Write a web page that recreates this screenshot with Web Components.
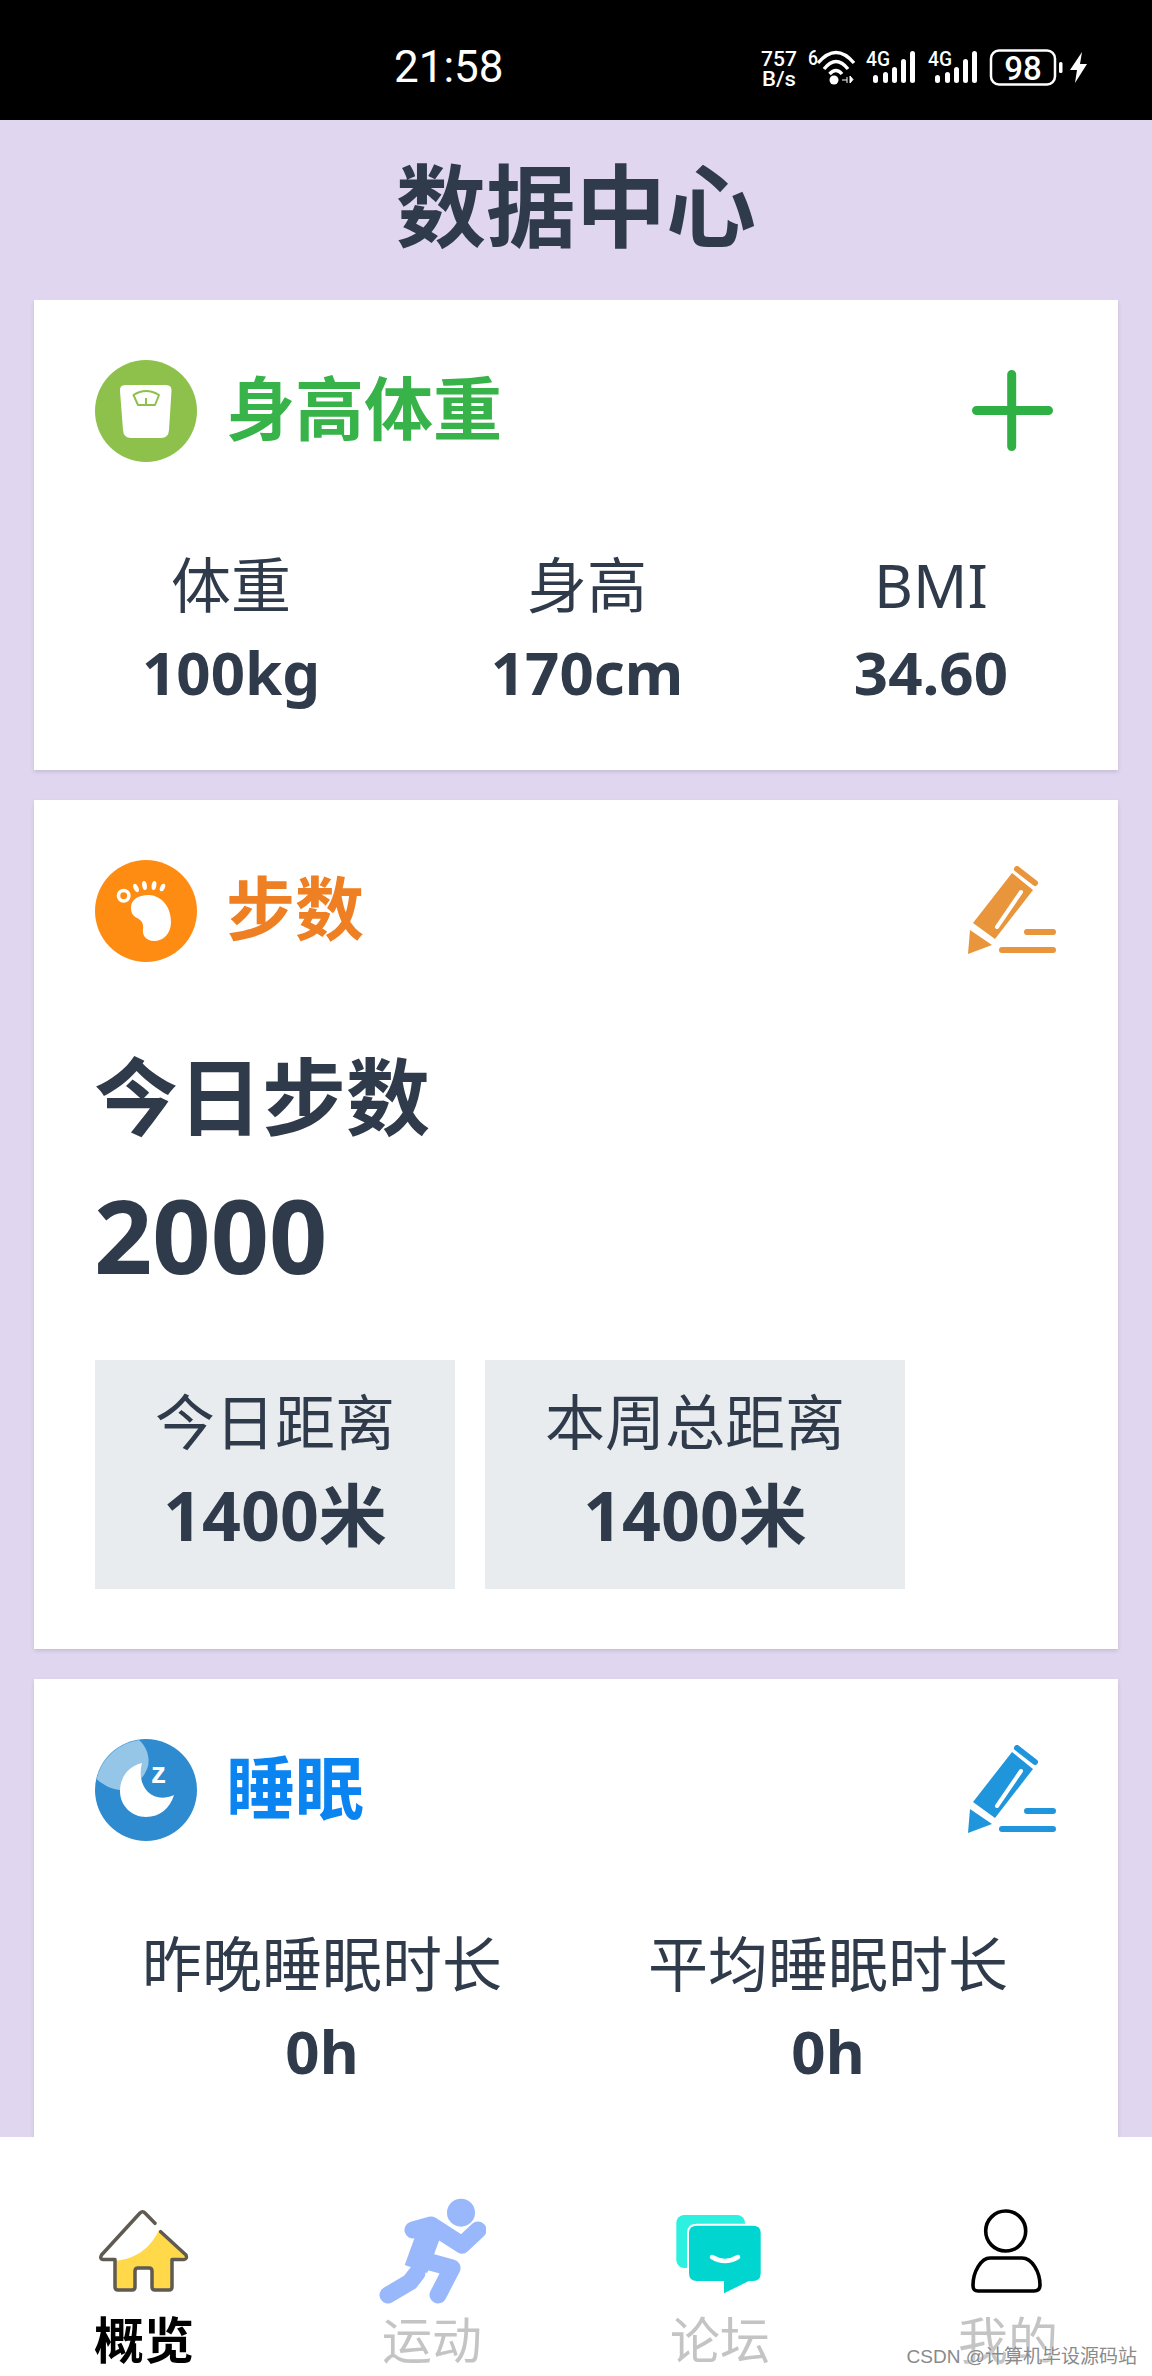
<!DOCTYPE html>
<html lang="zh">
<head>
<meta charset="utf-8">
<title>数据中心</title>
<style>
    html, body { margin: 0; padding: 0; height: 100%; }
    body {
        font-family: "Noto Sans", "Noto Sans CJK SC", sans-serif;
        color: #2f3a4a;
        background: #e0d6f0;
    }
</style>
</head>
<body>
<app-shell>
    <status-bar slot="status"></status-bar>
    <page-title slot="title">数据中心</page-title>

    <data-card heading="身高体重" color="#37b34a">
        <app-icon slot="icon" name="scale" size="102"></app-icon>
        <app-icon slot="action" name="plus" size="102"></app-icon>
        <stat-row>
            <stat-item label="体重" value="100kg"></stat-item>
            <stat-item label="身高" value="170cm"></stat-item>
            <stat-item label="BMI" value="34.60"></stat-item>
        </stat-row>
    </data-card>

    <data-card heading="步数" color="#ee7f22">
        <app-icon slot="icon" name="foot" size="102"></app-icon>
        <edit-icon slot="action" color="#e8953c"></edit-icon>
        <step-summary label="今日步数" value="2000"></step-summary>
        <box-row>
            <stat-box label="今日距离" value="1400米"></stat-box>
            <stat-box label="本周总距离" value="1400米"></stat-box>
        </box-row>
    </data-card>

    <data-card heading="睡眠" color="#0a84f0">
        <app-icon slot="icon" name="sleep" size="102"></app-icon>
        <edit-icon slot="action" color="#1f96dc"></edit-icon>
        <stat-row>
            <stat-item label="昨晚睡眠时长" value="0h"></stat-item>
            <stat-item label="平均睡眠时长" value="0h"></stat-item>
        </stat-row>
    </data-card>

    <tab-bar slot="tabs">
        <tab-item label="概览" icon="home" active></tab-item>
        <tab-item label="运动" icon="run"></tab-item>
        <tab-item label="论坛" icon="chat"></tab-item>
        <tab-item label="我的" icon="user"></tab-item>
    </tab-bar>
    <water-mark slot="tabs">CSDN @计算机毕设源码站</water-mark>
</app-shell>

<script>
// icon bodies, all drawn in a 102 or 108 box
const ICONS = {
    scale: `<circle cx="51" cy="51" r="51" fill="#8dc14b"/>
        <path d="M30 25H71Q77 25 76.5 31L74 70Q73.5 78 66 78H36Q28.5 78 28 70L25 31Q24.5 25 30 25Z" fill="#fff"/>
        <path d="M38.5 35Q51 27 64 35L60 45H43Z M51 38V45" fill="none" stroke="#8dc14b" stroke-width="2" stroke-linejoin="round"/>`,
    plus: `<path d="M20.500 50.500H92.500M55.700 14.500V86.500" stroke="#2fb044" stroke-width="9" stroke-linecap="round" fill="none"/>`,
    foot: `<circle cx="51" cy="51" r="51" fill="#ff8c12"/>
        <path d="M36 48C36 38 46 35 54 35C68 36 76 48 76 62C76 74 68 81 59 81C51 81 47 75 48 69C49 63 46 60 42 58C38 56 36 53 36 48Z" fill="#fff"/>
        <circle cx="28.7" cy="35.7" r="5.2" fill="none" stroke="#fff" stroke-width="3.6"/>
        <ellipse cx="41" cy="28" rx="2.3" ry="4.5" fill="#fff" transform="rotate(-25 41 28)"/>
        <ellipse cx="49.5" cy="25.5" rx="2.3" ry="4.5" fill="#fff" transform="rotate(-10 49.5 25.5)"/>
        <ellipse cx="59" cy="25.5" rx="2.3" ry="4.5" fill="#fff" transform="rotate(10 59 25.5)"/>
        <ellipse cx="67.5" cy="27.5" rx="2.3" ry="4" fill="#fff" transform="rotate(25 67.5 27.5)"/>`,
    sleep: `<circle cx="51" cy="51" r="51" fill="#2e8bd0"/>
        <path d="M44 1C52 8 56 20 52 30C47 42 37 50 25 51C16 50 8 46 1.5 40A51 51 0 0 1 44 1Z" fill="#95c6e8"/>
        <path d="M47 24C33 27 25 39 25 52C25 67 37 78 51 78C65 78 75 69 79 56C70 60 60 60 53 53C46 46 44 35 47 24Z" fill="#fff"/>
        <text x="56" y="44" font-family="Liberation Sans" font-weight="700" font-size="30" fill="#fff">z</text>`,
    home: `<path d="M69 33L96 60L82 62V93H62V71H45V93H25V64C45 62 60 52 69 33Z" fill="#ffd94a"/>
        <path d="M70.7 34.7L96 58Q97.5 62 94 62.5H82V90Q82 93 79 93H65Q62 93 62 90V74Q62 71 59 71H48Q45 71 45 74V90Q45 93 42 93H28Q25 93 25 90V62.5H13Q9.5 62 11.5 58L50 16Q52.7 13.5 55 16L65 26.3" fill="none" stroke="#5f5a52" stroke-width="3.5" stroke-linecap="round" stroke-linejoin="round"/>`,
    run: `<circle cx="83" cy="15.7" r="14" fill="#99b7fb"/>
        <g fill="none" stroke="#99b7fb" stroke-width="17" stroke-linecap="round" stroke-linejoin="round">
            <path d="M35 33L53 28L84 48L100 33"/>
            <path d="M45 63L74 71L60 98"/>
            <path d="M39 76L32 85L10 98"/>
        </g>
        <path d="M54 28L38 72" fill="none" stroke="#99b7fb" stroke-width="24"/>`,
    chat: `<rect x="10.3" y="18" width="68.7" height="53" rx="8" fill="#2df0e0"/>
        <path d="M31 27.7H87Q95.7 27.7 95.7 36V76Q95.7 85 87 85H83L59 97Q57 97.5 57 95V85H31Q22 85 22 76V36Q22 27.7 31 27.7Z" fill="#00d6cf" stroke="#fff" stroke-width="2"/>
        <path d="M46 60Q59 68 72 60" fill="none" stroke="#fff" stroke-width="4.5" stroke-linecap="round"/>`,
    user: `<circle cx="51.7" cy="34" r="20" fill="none" stroke="#000" stroke-width="3.6"/>
        <path d="M36 61H68C78 61 86 75 86 88C86 92 84 94 80 94H24C20 94 19 92 19 88C19 75 27 61 36 61Z" fill="none" stroke="#000" stroke-width="3.6"/>`
};

class AppShell extends HTMLElement {
    constructor() {
        super();
        this.attachShadow({ mode: 'open' }).innerHTML = `
            <style>
                :host { display: flex; flex-direction: column; height: 2376px; overflow: hidden; position: relative; }
                .scroll { flex: 1; min-height: 0; overflow: hidden; display: flex; flex-direction: column; gap: 30px; padding: 0 34px; }
                .tabs { position: relative; flex: none; }
            </style>
            <slot name="status"></slot>
            <slot name="title"></slot>
            <div class="scroll"><slot></slot></div>
            <div class="tabs"><slot name="tabs"></slot></div>`;
    }
}

class StatusBar extends HTMLElement {
    constructor() {
        super();
        const bars = x => [[133, 45], [143, 42], [152, 37], [161, 29], [170, 21]]
            .map(([bx, by]) => `<rect x="${bx + x}" y="${by}" width="5" height="${53 - by}" rx="2.5"/>`).join('');
        this.attachShadow({ mode: 'open' }).innerHTML = `
            <style>
                :host { display: flex; align-items: center; height: 120px; background: #000; color: #fff; flex: none; }
                .time { margin-left: 394px; width: 346px; font: 400 44px Roboto, sans-serif; padding-top: 14px; }
                svg { display: block; margin-top: 10px; font-family: Roboto, sans-serif; }
            </style>
            <div class="time">21:58</div>
            <svg width="360" height="70" viewBox="0 0 360 70" fill="#fff">
                <text x="21" y="36" font-size="21" font-weight="500" textLength="36" lengthAdjust="spacingAndGlyphs">757</text>
                <text x="22" y="56" font-size="21" font-weight="500" textLength="34" lengthAdjust="spacingAndGlyphs">B/s</text>
                <text x="68" y="35" font-size="20" font-weight="500" textLength="10" lengthAdjust="spacingAndGlyphs">6</text>
                <path d="M79 33Q97 12 115 33M85 39Q97 24 109 39M90.5 44Q97 37 103 44" transform="translate(-1 0)" fill="none" stroke="#fff" stroke-width="3.4"/>
                <circle cx="94" cy="50" r="4.5"/>
                <path d="M102 50h5M107 47v6M110 46v7l3 -3.500z" fill="#fff" stroke="#fff" stroke-width="1"/>
                <text x="126" y="36" font-size="21" font-weight="500" textLength="24" lengthAdjust="spacingAndGlyphs">4G</text>
                ${bars(0)}
                <text x="188" y="36" font-size="21" font-weight="500" textLength="24" lengthAdjust="spacingAndGlyphs">4G</text>
                ${bars(62)}
                <rect x="251" y="20.500" width="64" height="34" rx="8" fill="none" stroke="#fff" stroke-width="2.500"/>
                <text x="283" y="49.500" font-size="33" font-weight="500" text-anchor="middle">98</text>
                <rect x="319" y="32" width="3.500" height="11" rx="1.500"/>
                <path d="M342 22L330 40H337L335 53L347 34H340Z"/>
            </svg>`;
    }
}

class PageTitle extends HTMLElement {
    constructor() {
        super();
        this.attachShadow({ mode: 'open' }).innerHTML = `
            <style>
                :host { display: flex; align-items: center; justify-content: center; box-sizing: border-box; height: 180px; padding-bottom: 10px; flex: none; font-size: 90px; line-height: 120px; font-weight: 700; color: #2f3a4a; }
            </style>
            <slot></slot>`;
    }
}

class AppIcon extends HTMLElement {
    connectedCallback() {
        const name = this.getAttribute('name');
        const size = this.getAttribute('size') || 108;
        this.shadowRoot || this.attachShadow({ mode: 'open' });
        this.shadowRoot.innerHTML = `
            <style>:host { display: block; width: ${size}px; height: ${size}px; flex: none; } svg { display: block; }</style>
            <svg width="${size}" height="${size}" viewBox="0 0 ${size} ${size}">${ICONS[name]}</svg>`;
    }
}

class EditIcon extends HTMLElement {
    connectedCallback() {
        const color = this.getAttribute('color');
        this.shadowRoot || this.attachShadow({ mode: 'open' });
        this.shadowRoot.innerHTML = `
            <style>:host { display: block; flex: none; margin-right: 2px; } svg { display: block; }</style>
            <svg width="88" height="90" viewBox="28 18 88 90" fill="${color}">
                <path d="M72 25L93 42L55 91L33 75Z"/>
                <path d="M30 82L52 97L28 106Z"/>
                <g fill="none" stroke-linecap="round">
                    <path d="M77 21L95 35" stroke="${color}" stroke-width="6"/>
                    <path d="M81 44L57 79" stroke="#fff" stroke-width="4"/>
                    <path d="M87 84H113M62 102H113" stroke="${color}" stroke-width="6"/>
                </g>
            </svg>`;
    }
}

class DataCard extends HTMLElement {
    connectedCallback() {
        this.shadowRoot || this.attachShadow({ mode: 'open' });
        this.shadowRoot.innerHTML = `
            <style>
                :host { display: block; flex: none; background: #fff; box-shadow: 0 2px 4px rgba(0, 0, 0, .12); padding-top: 60px; padding-bottom: 50px; }
                .head { display: flex; align-items: center; padding: 0 60px 0 61px; height: 102px; }
                h2 { margin: 0 0 0 29px; flex: 1; height: 102px; font-size: 69px; line-height: 96px; font-weight: 700; color: ${this.getAttribute('color')}; }
            </style>
            <div class="head">
                <slot name="icon"></slot>
                <h2>${this.getAttribute('heading')}</h2>
                <slot name="action"></slot>
            </div>
            <slot></slot>`;
    }
}

class StatRow extends HTMLElement {
    constructor() {
        super();
        this.attachShadow({ mode: 'open' }).innerHTML = `
            <style>:host { display: flex; justify-content: space-between; padding: 0 110px 0 108px; margin-top: 78px; }</style>
            <slot></slot>`;
    }
}

class StatItem extends HTMLElement {
    connectedCallback() {
        this.shadowRoot || this.attachShadow({ mode: 'open' });
        this.shadowRoot.innerHTML = `
            <style>
                :host { display: block; text-align: center; font-size: 60px; line-height: 90px; }
                span, b { display: block; height: 90px; }
                b { font-weight: 700; line-height: 84px; }
            </style>
            <span>${this.getAttribute('label')}</span>
            <b>${this.getAttribute('value')}</b>`;
    }
}

class StepSummary extends HTMLElement {
    connectedCallback() {
        this.shadowRoot || this.attachShadow({ mode: 'open' });
        this.shadowRoot.innerHTML = `
            <style>
                :host { display: block; padding: 0 60px; margin-top: 78px; font-weight: 700; }
                div { height: 120px; font-size: 84px; line-height: 114px; }
                strong { display: block; height: 160px; font-size: 102px; line-height: 150px; font-weight: 700; }
            </style>
            <div>${this.getAttribute('label')}</div>
            <strong>${this.getAttribute('value')}</strong>`;
    }
}

class BoxRow extends HTMLElement {
    constructor() {
        super();
        this.attachShadow({ mode: 'open' }).innerHTML = `
            <style>:host { display: flex; gap: 30px; padding: 0 60px 10px 61px; margin-top: 40px; }</style>
            <slot></slot>`;
    }
}

class StatBox extends HTMLElement {
    connectedCallback() {
        this.shadowRoot || this.attachShadow({ mode: 'open' });
        this.shadowRoot.innerHTML = `
            <style>
                :host { display: block; box-sizing: border-box; height: 229px; padding: 20px 60px; background: #e8ecef; text-align: center; font-size: 60px; }
                span, b { display: block; height: 92px; }
                span { line-height: 84px; }
                b { font-weight: 700; font-size: 68px; line-height: 86px; }
            </style>
            <span>${this.getAttribute('label')}</span>
            <b>${this.getAttribute('value')}</b>`;
    }
}

class TabBar extends HTMLElement {
    constructor() {
        super();
        this.attachShadow({ mode: 'open' }).innerHTML = `
            <style>:host { display: grid; grid-template-columns: repeat(4, 1fr); height: 239px; box-sizing: border-box; padding-top: 60px; background: #fff; }</style>
            <slot></slot>`;
    }
}

class TabItem extends HTMLElement {
    connectedCallback() {
        const active = this.hasAttribute('active');
        this.shadowRoot || this.attachShadow({ mode: 'open' });
        this.shadowRoot.innerHTML = `
            <style>
                :host { display: flex; flex-direction: column; align-items: center; }
                span { font-size: 50px; line-height: 70px; font-weight: ${active ? 700 : 400}; color: ${active ? '#000' : '#c4c4c4'}; }
            </style>
            <app-icon name="${this.getAttribute('icon')}" size="108"></app-icon>
            <span>${this.getAttribute('label')}</span>`;
    }
}

class WaterMark extends HTMLElement {
    constructor() {
        super();
        this.attachShadow({ mode: 'open' }).innerHTML = `
            <style>
                :host { position: absolute; right: 15px; bottom: 5px; font: 400 19px/28px "Liberation Sans", "Noto Sans CJK SC", sans-serif; color: #8a8a8a; text-shadow: 0 0 2px #fff; }
            </style>
            <slot></slot>`;
    }
}

customElements.define('app-icon', AppIcon);
customElements.define('edit-icon', EditIcon);
customElements.define('status-bar', StatusBar);
customElements.define('page-title', PageTitle);
customElements.define('data-card', DataCard);
customElements.define('stat-row', StatRow);
customElements.define('stat-item', StatItem);
customElements.define('step-summary', StepSummary);
customElements.define('box-row', BoxRow);
customElements.define('stat-box', StatBox);
customElements.define('tab-bar', TabBar);
customElements.define('tab-item', TabItem);
customElements.define('water-mark', WaterMark);
customElements.define('app-shell', AppShell);
</script>
</body>
</html>
